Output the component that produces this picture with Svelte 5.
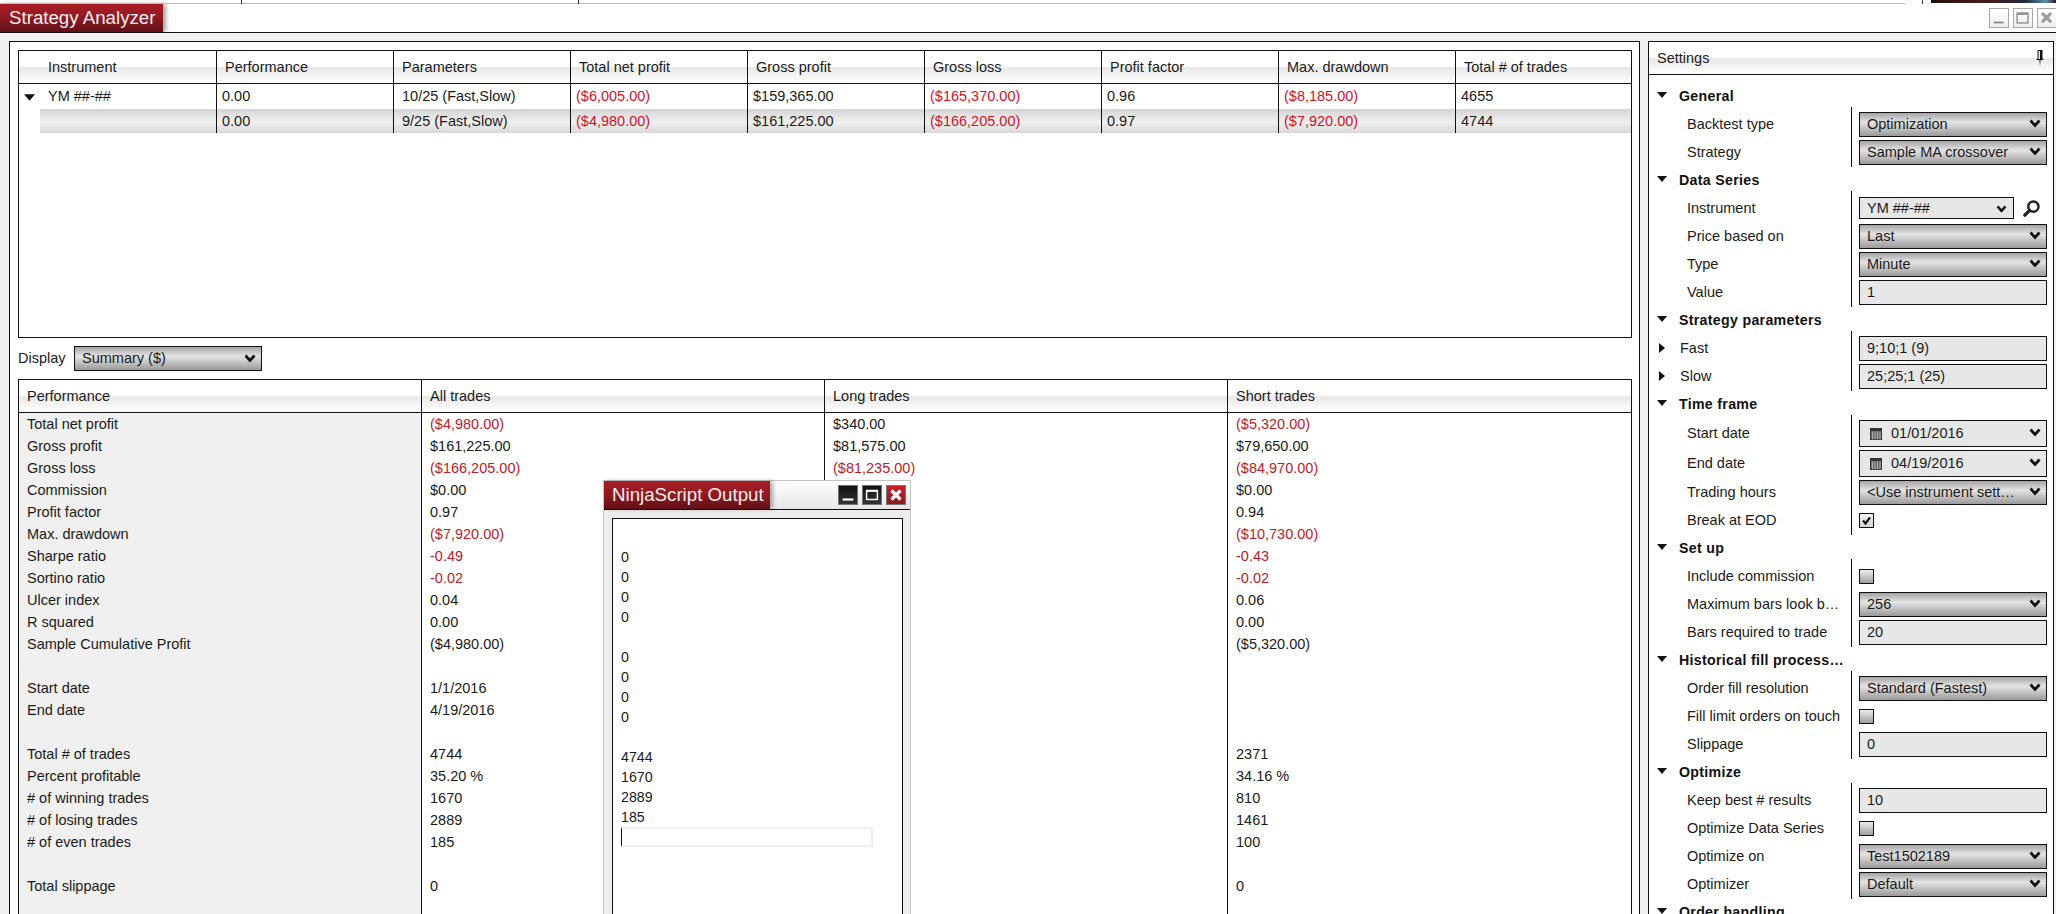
<script>
  const topCols = ['Instrument','Performance','Parameters','Total net profit','Gross profit','Gross loss','Profit factor','Max. drawdown','Total # of trades'];
  const topRows = [
    ['YM ##-##','0.00','10/25 (Fast,Slow)','($6,005.00)','$159,365.00','($165,370.00)','0.96','($8,185.00)','4655'],
    ['','0.00','9/25 (Fast,Slow)','($4,980.00)','$161,225.00','($166,205.00)','0.97','($7,920.00)','4744']
  ];
  const summary = [
    ['Total net profit','($4,980.00)','$340.00','($5,320.00)'],
    ['Gross profit','$161,225.00','$81,575.00','$79,650.00'],
    ['Gross loss','($166,205.00)','($81,235.00)','($84,970.00)'],
    ['Commission','$0.00','','$0.00'],
    ['Profit factor','0.97','','0.94'],
    ['Max. drawdown','($7,920.00)','','($10,730.00)'],
    ['Sharpe ratio','-0.49','','-0.43'],
    ['Sortino ratio','-0.02','','-0.02'],
    ['Ulcer index','0.04','','0.06'],
    ['R squared','0.00','','0.00'],
    ['Sample Cumulative Profit','($4,980.00)','','($5,320.00)'],
    ['','','',''],
    ['Start date','1/1/2016','',''],
    ['End date','4/19/2016','',''],
    ['','','',''],
    ['Total # of trades','4744','','2371'],
    ['Percent profitable','35.20 %','','34.16 %'],
    ['# of winning trades','1670','','810'],
    ['# of losing trades','2889','','1461'],
    ['# of even trades','185','','100'],
    ['','','',''],
    ['Total slippage','0','','0'],
    ['','','','']
  ];
  const isRed = (v, i) => i > 0 && (v.startsWith('-') || v.startsWith('('));
  const noRedRows = ['Sample Cumulative Profit'];

  const groups = [
    { name:'General', rows:[
      {label:'Backtest type', kind:'select', value:'Optimization'},
      {label:'Strategy', kind:'select', value:'Sample MA crossover'}
    ]},
    { name:'Data Series', rows:[
      {label:'Instrument', kind:'instrument', value:'YM ##-##'},
      {label:'Price based on', kind:'select', value:'Last'},
      {label:'Type', kind:'select', value:'Minute'},
      {label:'Value', kind:'input', value:'1'}
    ]},
    { name:'Strategy parameters', rows:[
      {label:'Fast', kind:'input', value:'9;10;1 (9)', expand:true},
      {label:'Slow', kind:'input', value:'25;25;1 (25)', expand:true}
    ]},
    { name:'Time frame', rows:[
      {label:'Start date', kind:'date', value:'01/01/2016'},
      {label:'End date', kind:'date', value:'04/19/2016'},
      {label:'Trading hours', kind:'select', value:'<Use instrument sett…'},
      {label:'Break at EOD', kind:'check', checked:true}
    ]},
    { name:'Set up', rows:[
      {label:'Include commission', kind:'check'},
      {label:'Maximum bars look b…', kind:'select', value:'256'},
      {label:'Bars required to trade', kind:'input', value:'20'}
    ]},
    { name:'Historical fill process…', rows:[
      {label:'Order fill resolution', kind:'select', value:'Standard (Fastest)'},
      {label:'Fill limit orders on touch', kind:'check'},
      {label:'Slippage', kind:'input', value:'0'}
    ]},
    { name:'Optimize', rows:[
      {label:'Keep best # results', kind:'input', value:'10'},
      {label:'Optimize Data Series', kind:'check'},
      {label:'Optimize on', kind:'select', value:'Test1502189'},
      {label:'Optimizer', kind:'select', value:'Default'}
    ]},
    { name:'Order handling', rows:[] }
  ];
  const output = ['0','0','0','0','','0','0','0','0','','4744','1670','2889','185'];
</script>

{#snippet chevron(cls)}
  <svg class={cls} viewBox="0 0 12 9"><path d="M1.5 1.5 6 6.5 10.5 1.5" fill="none" stroke="#111" stroke-width="2.8"/></svg>
{/snippet}
{#snippet down(cls)}
  <svg class={cls} viewBox="0 0 10 6"><path d="M0 0H10L5 6Z" fill="#111"/></svg>
{/snippet}

<div class="app">
  <div class="strip">
    <i class="tick t1"></i><i class="tick t2"></i><i class="tick t3"></i>
    <div class="photo"></div>
  </div>

  <header class="titlebar">
    <div class="tab">Strategy Analyzer</div>
    <div class="winbtns">
      <button class="wb" aria-label="Minimize"><svg viewBox="0 0 20 20"><path d="M4 15H15" stroke="#8a8a8a" stroke-width="2"/></svg></button>
      <button class="wb" aria-label="Maximize"><svg viewBox="0 0 20 20"><rect x="3.5" y="4.5" width="12" height="11" fill="none" stroke="#8a8a8a" stroke-width="1.5"/><path d="M3.5 5.5H15.5" stroke="#8a8a8a" stroke-width="2"/></svg></button>
      <button class="wb" aria-label="Close"><svg viewBox="0 0 20 20"><path d="M4.5 4.5 14.5 14.5M14.5 4.5 4.5 14.5" stroke="#9a9a9a" stroke-width="3.4"/></svg></button>
    </div>
  </header>

  <main class="work">
    <section class="analysis">
      <div class="toptable">
        <div class="thead topgrid">
          {#each topCols as c, i}<div class="th" class:first={i === 0}>{c}</div>{/each}
        </div>
        {#each topRows as row, r}
          <div class="topgrid trow" class:r2={r === 1}>
            {#each row as v, i}
              <div class="td" class:first={i === 0} class:param={i === 2} class:red={v.startsWith('(')}>
                {#if i === 0 && r === 0}{@render down('tri-abs')}{/if}{v}
              </div>
            {/each}
          </div>
        {/each}
      </div>

      <div class="display">
        <span class="dlabel">Display</span>
        <div class="ctl sel dsel">Summary ($){@render chevron('chev')}</div>
      </div>

      <div class="sumtable">
        <div class="sumgrid shead">
          <div class="sh">Performance</div><div class="sh">All trades</div><div class="sh">Long trades</div><div class="sh">Short trades</div>
        </div>
        <div class="sumbody">
          {#each summary as row}
            <div class="sumgrid srow">
              {#each row as v, i}
                <div class="sc" class:lab={i === 0} class:dred={isRed(v, i) && !noRedRows.includes(row[0])}>{v}</div>
              {/each}
            </div>
          {/each}
        </div>
      </div>
    </section>

    <aside class="settings">
      <div class="shd">
        <span>Settings</span>
        <svg class="pin" viewBox="0 0 8 16"><path d="M1.5 0H6.5V9H7.5V10H4.6L4 16 3.4 10H.5V9H1.5Z" fill="#111"/><rect x="2.5" y="1" width="1.5" height="8" fill="#e8e8e8"/></svg>
      </div>
      <div class="groups">
        {#each groups as g}
          <div class="group">
            <div class="ghead">{@render down('tri')}<span>{g.name}</span></div>
            {#if g.rows.length}
              <div class="gbody">
                {#each g.rows as r}
                  <div class="prow" class:tall={r.kind === 'date'}>
                    <div class="plabel" class:exp={r.expand}>
                      {#if r.expand}<svg class="rtri" viewBox="0 0 6 10"><path d="M0 0V10L6 5Z" fill="#111"/></svg>{/if}{r.label}
                    </div>
                    <div class="pctl">
                      {#if r.kind === 'select'}
                        <div class="ctl sel">{r.value}{@render chevron('chev')}</div>
                      {:else if r.kind === 'input'}
                        <div class="ctl inp">{r.value}</div>
                      {:else if r.kind === 'date'}
                        <div class="ctl inp date">
                          <svg class="cal" viewBox="0 0 12 12">
                            <rect width="12" height="12" fill="#333"/>
                            <path d="M1 4H11M1 6H11M1 8H11M1 10H11M2.5 3.5V11.5M5 3.5V11.5M7.5 3.5V11.5M10 3.5V11.5" stroke="#cfcfcf" stroke-width=".7"/>
                          </svg>
                          <span>{r.value}</span>{@render chevron('chev')}
                        </div>
                      {:else if r.kind === 'instrument'}
                        <div class="instr">
                          <div class="ctl inp ibox">{r.value}{@render chevron('chev small')}</div>
                          <svg class="mag" viewBox="0 0 20 20"><circle cx="12" cy="8" r="5.4" fill="none" stroke="#222" stroke-width="2.6"/><path d="M8 12 3 17" stroke="#222" stroke-width="3.6" stroke-linecap="round"/></svg>
                        </div>
                      {:else}
                        <div class="chk" class:on={r.checked}>
                          {#if r.checked}<svg viewBox="0 0 13 13"><path d="M3 6.5 5.5 9.5 10 3.5" fill="none" stroke="#111" stroke-width="2.2"/></svg>{/if}
                        </div>
                      {/if}
                    </div>
                  </div>
                {/each}
              </div>
            {/if}
          </div>
        {/each}
      </div>
    </aside>
  </main>

  <div class="output">
    <div class="otitle">
      <div class="otab">NinjaScript Output</div>
      <div class="obtns">
        <button class="ob" aria-label="Minimize"><svg viewBox="0 0 20 20"><path d="M4 15H16" stroke="#fff" stroke-width="2.4"/></svg></button>
        <button class="ob" aria-label="Maximize"><svg viewBox="0 0 20 20"><rect x="4" y="5" width="12" height="10" fill="none" stroke="#fff" stroke-width="1.6"/><path d="M4 5.5H16" stroke="#fff" stroke-width="2"/></svg></button>
        <button class="ob close" aria-label="Close"><svg viewBox="0 0 20 20"><path d="M5 5 15 15M15 5 5 15" stroke="#fff" stroke-width="3.6"/></svg></button>
      </div>
    </div>
    <div class="oscreen">
      {#each output as l}<div class="oline">{l}</div>{/each}
      <div class="oinput"></div>
    </div>
  </div>
</div>

<style>
  :global(body) { margin: 0; background: #fff; }
  .app {
    position: relative; width: 2056px; height: 914px; overflow: hidden;
    display: flex; flex-direction: column; background: #fff;
    font: 14.5px/1.2 "Liberation Sans", Arial, sans-serif; color: #1a1a1a;
  }

  .strip { position: relative; height: 4px; flex: none; }
  .strip::before { content: ""; position: absolute; left: 0; top: 3px; width: 1905px; height: 1px; background: #bdbdbd; }
  .tick { position: absolute; top: 0; width: 1px; height: 4px; background: #333; }
  .t1 { left: 241px; } .t2 { left: 578px; } .t3 { left: 1922px; }
  .photo {
    position: absolute; left: 1931px; right: 0; top: 0; height: 3px;
    background: linear-gradient(90deg, #241010, #4a1a1a 40%, #1c2a3a 75%, #5a90b0 92%, #2a1a14);
  }

  .titlebar {
    flex: none; height: 28px; display: flex; justify-content: space-between; align-items: center;
    border-bottom: 1px solid #111;
  }
  .tab {
    align-self: stretch; width: 163px; box-sizing: border-box; padding-left: 9px;
    display: flex; align-items: center; white-space: nowrap;
    background: linear-gradient(#ab1c25, #8e1a22 50%, #5f1016);
    color: #f5eeee; font-size: 18.7px; box-shadow: 3px 0 4px rgba(0,0,0,.35);
  }
  .winbtns { display: flex; gap: 4px; }
  .wb {
    width: 20px; height: 20px; padding: 0; box-sizing: border-box;
    border: 1px solid #a8a8a8; background: linear-gradient(#fff, #eee);
  }
  .wb:last-child { width: 19px; border-right: 0; }
  .wb svg, .ob svg { display: block; width: 100%; height: 100%; }

  .work {
    flex: 1; min-height: 0; display: flex; gap: 8px; box-sizing: border-box;
    padding: 8px 2px 0 9px; background: #f0f0f0; overflow: hidden;
  }
  .analysis {
    width: 1631px; flex: none; box-sizing: border-box; background: #fff;
    border: 1px solid #111; border-bottom: 0; padding: 8px 7px 0 8px;
  }

  .toptable { height: 288px; box-sizing: border-box; border: 1px solid #111; }
  .topgrid { display: grid; grid-template-columns: 198px repeat(7, 177px) 1fr; }
  .thead {
    height: 33px; box-sizing: border-box; border-bottom: 1px solid #111;
    background: linear-gradient(#fff 48%, #e8e8e8 52%, #fff);
  }
  .th { display: flex; align-items: center; padding: 1px 0 0 8px; border-right: 1px solid #111; }
  .th:last-child { border-right: 0; }
  .th.first { padding-left: 29px; }
  .trow { height: 25px; }
  .trow.r2 {
    height: 24px; padding-left: 21px; grid-template-columns: 177px repeat(7, 177px) 1fr;
    background: linear-gradient(#d4d4d4, #f0f0f0 55%, #d8d8d8) content-box;
  }
  .td { position: relative; display: flex; align-items: center; padding: 1px 0 0 5px; border-right: 1px solid #111; }
  .td:last-child { border-right: 0; }
  .td.first { padding-left: 29px; }
  .td.param { padding-left: 8px; }
  .tri-abs { position: absolute; left: 5px; top: 10px; width: 11px; height: 7px; }
  .red { color: #d8101f; }
  .dred { color: #c11a28; }

  .display { height: 41px; display: flex; align-items: center; gap: 10px; }
  .dlabel { width: 46px; padding-top: 1px; }
  .ctl {
    box-sizing: border-box; height: 25px; border: 1px solid #111; display: flex; align-items: center;
    padding: 1px 0 0 7px; position: relative; white-space: nowrap;
  }
  .sel { background: linear-gradient(#a4a4a4, #e4e4e4 40%, #9a9a9a); }
  .inp { background: #e7e7e7; }
  .dsel { width: 188px; }
  .chev { position: absolute; right: 5px; top: 50%; margin-top: -5px; width: 12px; height: 9px; }
  .chev.small { right: 6px; width: 11px; height: 8px; margin-top: -3px; }

  .sumtable { border: 1px solid #111; border-bottom: 0; height: 600px; }
  .sumgrid { display: grid; grid-template-columns: 403px 403px 403px 1fr; }
  .shead {
    height: 33px; box-sizing: border-box; border-bottom: 1px solid #111;
    background: linear-gradient(#fff 48%, #e8e8e8 52%, #fff);
  }
  .sh { display: flex; align-items: center; padding: 1px 0 0 8px; border-right: 1px solid #111; }
  .sh:last-child { border-right: 0; }
  .srow { height: 22px; }
  .sc { display: flex; align-items: center; padding: 1px 0 0 8px; border-right: 1px solid #111; }
  .sc:last-child { border-right: 0; }
  .sc.lab { background: #f0f0f0; }

  .settings { width: 406px; flex: none; box-sizing: border-box; background: #fff; border: 1px solid #111; border-bottom: 0; }
  .shd {
    height: 33px; box-sizing: border-box; border-bottom: 1px solid #111;
    display: flex; align-items: center; justify-content: space-between; padding: 1px 9px 0 8px;
    background: linear-gradient(#fff 48%, #e8e8e8 52%, #fff);
  }
  .pin { width: 8px; height: 16px; margin-top: -2px; }
  .groups { padding-top: 7px; }
  .ghead { height: 28px; box-sizing: border-box; padding: 1px 0 0 8px; display: flex; align-items: center; gap: 12px; font-weight: bold; font-size: 14.2px; letter-spacing: .3px; color: #111; }
  .tri { width: 10px; height: 6px; flex: none; margin-top: -3px; }
  .gbody { position: relative; }
  .gbody::before { content: ""; position: absolute; left: 202px; top: -3px; bottom: -1px; width: 1px; background: #111; }
  .prow { height: 28px; display: grid; grid-template-columns: 164px 188px; align-items: center; padding-left: 38px; }
  .prow.tall { height: 30px; }
  .plabel { display: flex; align-items: center; white-space: nowrap; padding-top: 1px; }
  .plabel.exp { margin-left: -7px; position: relative; }
  .rtri { position: absolute; left: -21px; width: 6px; height: 10px; }
  .pctl { padding-left: 8px; display: flex; width: 188px; box-sizing: content-box; }
  .pctl > .ctl { width: 188px; }
  .tall .ctl { height: 27px; }
  .date { gap: 9px; padding-left: 10px; }
  .cal { width: 12px; height: 12px; flex: none; }
  .instr { display: flex; align-items: center; width: 188px; gap: 8px; }
  .ibox { width: 155px; height: 22px; flex: none; }
  .mag { width: 19px; height: 19px; }
  .chk { width: 15px; height: 15px; box-sizing: border-box; border: 1px solid #111; background: linear-gradient(#ededed, #9f9f9f); }
  .chk.on { background: linear-gradient(#f2f2f2, #d4d4d4); }
  .chk svg { display: block; width: 13px; height: 13px; }

  .output {
    position: absolute; left: 603px; top: 480px; width: 308px; height: 440px;
    box-sizing: border-box; background: #ededed; border: 1px solid #c4c4c4;
  }
  .otitle {
    height: 29px; box-sizing: border-box; border-bottom: 1px solid #111;
    display: flex; justify-content: space-between; align-items: center;
    background: linear-gradient(#fff, #e6e6e6);
  }
  .otab {
    align-self: stretch; width: 166px; box-sizing: border-box; padding-left: 8px;
    display: flex; align-items: center; white-space: nowrap;
    background: linear-gradient(#ab1c25, #8e1a22 50%, #5f1016);
    color: #f5eeee; font-size: 18.7px; box-shadow: 3px 0 4px rgba(0,0,0,.3);
  }
  .obtns { display: flex; gap: 4px; margin-right: 4px; }
  .ob { width: 20px; height: 20px; padding: 0; border: 1px solid #777; background: linear-gradient(#111, #333); box-sizing: border-box; }
  .ob.close { background: linear-gradient(#c81e28, #8c1a20); }
  .oscreen {
    margin: 8px 7px 0 8px; height: 420px; box-sizing: border-box;
    background: #fff; border: 1px solid #111; padding: 28px 0 0 8px; font-size: 14.2px;
  }
  .oline { height: 20px; line-height: 20px; }
  .oinput { width: 252px; height: 20px; box-sizing: border-box; border: 2px solid #efefef; border-left: 1px solid #111; }
</style>
